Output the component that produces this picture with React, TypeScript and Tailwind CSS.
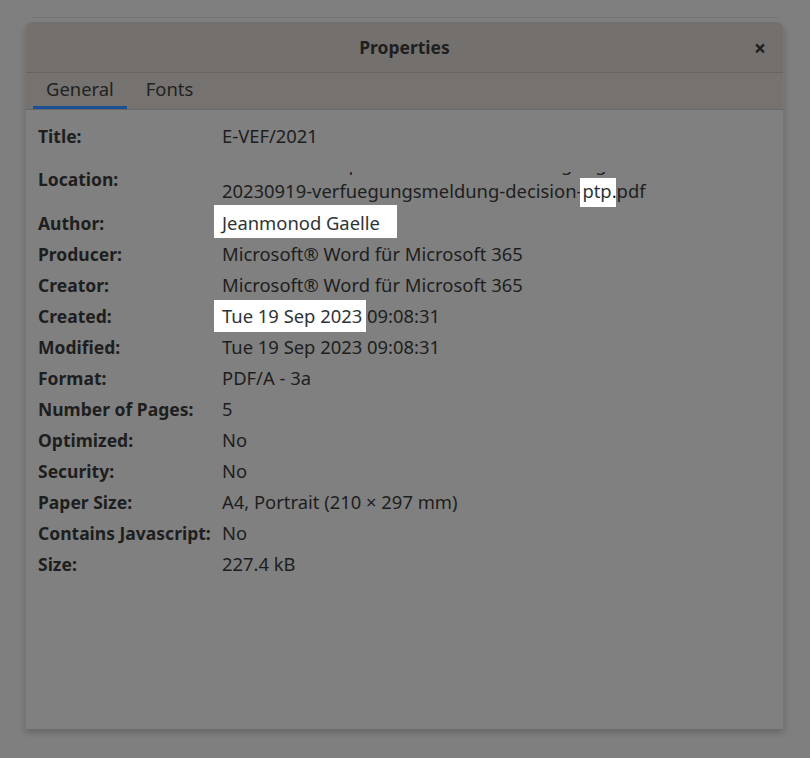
import React from 'react';

const font = { fontFamily: '"Noto Sans", "Open Sans", sans-serif' };

type Row = { label: string; value: React.ReactNode };

function Mark({ children, className }: { children: React.ReactNode; className: string }) {
  // white highlight boxes that sit over the dimmed dialog
  return <span className={'inline-block bg-white text-[#2e3436] ' + className}>{children}</span>;
}

const rows: Row[] = [
  { label: 'Author:', value: <Mark className="-ml-2 pl-2 pr-[17px] pt-[7px] pb-[4px] -mt-[7px] -mb-[4px]">Jeanmonod Gaelle</Mark> },
  { label: 'Producer:', value: 'Microsoft® Word für Microsoft 365' },
  { label: 'Creator:', value: 'Microsoft® Word für Microsoft 365' },
  {
    label: 'Created:',
    value: (
      <>
        <Mark className="-ml-2 pl-2 pr-[4px] -mr-[4px] py-[5px] -my-[5px]">Tue 19 Sep 2023</Mark> 09:08:31
      </>
    ),
  },
  { label: 'Modified:', value: 'Tue 19 Sep 2023 09:08:31' },
  { label: 'Format:', value: 'PDF/A - 3a' },
  { label: 'Number of Pages:', value: '5' },
  { label: 'Optimized:', value: 'No' },
  { label: 'Security:', value: 'No' },
  { label: 'Paper Size:', value: 'A4, Portrait (210 × 297 mm)' },
  { label: 'Contains Javascript:', value: 'No' },
  { label: 'Size:', value: '227.4 kB' },
];

export default function App() {
  return (
    <div className="h-[758px] w-[810px] overflow-hidden bg-[#7f7f7f] pt-[17px] px-[25px]" style={font}>
      {/* sheet edge behind the dialog */}
      <div className="mx-[7px] h-[5px] border-t border-[#747474]" />
      <div className="flex h-[707px] w-[759px] flex-col overflow-hidden rounded-t-[8px] border-x border-[#767676] bg-[#808080] shadow-[0_4px_6px_rgba(0,0,0,0.18)]">
        {/* header */}
        <div className="relative flex h-[51px] shrink-0 items-center justify-center border-b border-[#666462] bg-[#73706d]">
          <span className="text-[17.5px] font-bold text-[#1f1f1f]">Properties</span>
          <span className="absolute right-[17px] top-[14px] text-[21px] font-bold leading-6 text-[#1f1f1f]">×</span>
        </div>

        {/* tabs */}
        <div className="flex h-[37px] shrink-0 items-end border-b border-[#6a6866] bg-[#75726f] px-[7px]">
          <div className="flex h-full flex-col items-center justify-end">
            <span className="px-[13px] pb-[3px] text-[18.4px] text-[#222]">General</span>
            <div className="h-[3px] w-full bg-[#1c4f94]" />
          </div>
          <div className="flex h-full flex-col items-center justify-end">
            <span className="pl-[19px] pr-[20px] pb-[6px] text-[18.4px] text-[#222]">Fonts</span>
          </div>
        </div>

        {/* body */}
        <div className="flex flex-col pl-[12px] pt-[10px] text-[18.4px] leading-[22px] text-[#1e1e1e]">
          <div className="grid h-[31px] grid-cols-[184px_1fr] items-center">
            <span className="text-[17.5px] font-bold">Title:</span>
            <span>E-VEF/2021</span>
          </div>
          <div className="grid h-[56px] grid-cols-[184px_1fr] items-center">
            <span className="text-[17.5px] font-bold">Location:</span>
            <div className="flex h-[56px] flex-col justify-end overflow-hidden pb-[5px]">
              {/* scrolled path: only the tails of the line above show */}
              <div className="mb-[4px] h-[4px] overflow-hidden">
                <div className="-mt-[19px] whitespace-nowrap">/home/nutzer/pdf/Akten/Steuer/Verfuegung</div>
              </div>
              <div className="whitespace-nowrap">
                20230919-verfuegungsmeldung-decision-
                <Mark className="-ml-[2px] pl-[2px] pr-[4px] -mr-[4px] pt-[2px] pb-[16px] -mt-[2px] -mb-[16px]">ptp</Mark>
                .pdf
              </div>
            </div>
          </div>
          {rows.map((r) => (
            <div key={r.label} className="grid h-[31px] grid-cols-[184px_1fr] items-center">
              <span className="text-[17.5px] font-bold">{r.label}</span>
              <span className="whitespace-nowrap">{r.value}</span>
            </div>
          ))}
        </div>
      </div>
    </div>
  );
}
